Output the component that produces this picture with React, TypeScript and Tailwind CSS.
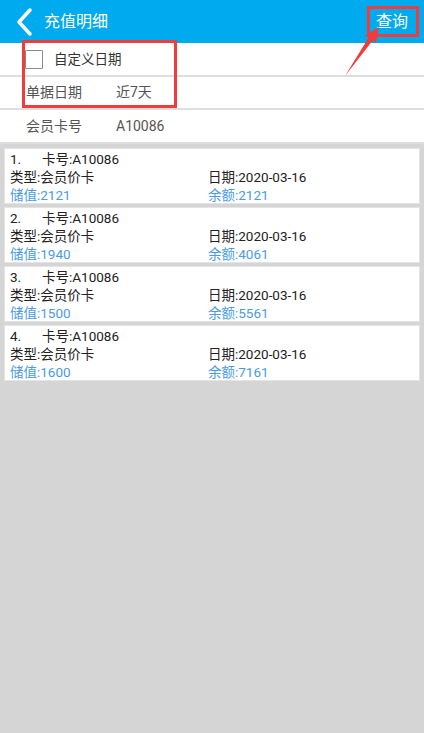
import React from "react";

const items = [
  { n: "1.", card: "A10086", type: "会员价卡", date: "2020-03-16", store: "2121", bal: "2121" },
  { n: "2.", card: "A10086", type: "会员价卡", date: "2020-03-16", store: "1940", bal: "4061" },
  { n: "3.", card: "A10086", type: "会员价卡", date: "2020-03-16", store: "1500", bal: "5561" },
  { n: "4.", card: "A10086", type: "会员价卡", date: "2020-03-16", store: "1600", bal: "7161" },
];

export default function App() {
  return (
    <div
      className="relative w-[424px] h-[733px] bg-[#d5d5d5] overflow-hidden"
      style={{ fontFamily: "Roboto, 'Noto Sans CJK SC', sans-serif" }}
    >
      {/* header */}
      <div className="h-[43px] bg-[#00aaef] flex items-center text-white">
        <svg width="40" height="43" viewBox="0 0 40 43" className="shrink-0">
          <polyline points="30,10 19,22 30,34" fill="none" stroke="white" strokeWidth="3.5" strokeLinecap="round" strokeLinejoin="round" />
        </svg>
        <span className="ml-[4px] text-[16px]">充值明细</span>
        <span className="ml-auto mr-[16px] text-[16px]">查询</span>
      </div>

      {/* filter rows */}
      <div className="bg-white">
        <div className="h-[34px] flex items-center border-b-2 border-[#dedede]">
          <div className="ml-[25px] w-[18px] h-[19px] border border-[#8a8a8a] rounded-[1px]" />
          <span className="ml-[11px] text-[13.5px] text-[#333]">自定义日期</span>
        </div>
        <div className="h-[33px] flex items-center border-b-2 border-[#dedede] text-[14px] text-[#555]">
          <span className="ml-[26px] w-[90px]">单据日期</span>
          <span>近7天</span>
        </div>
        <div className="h-[34px] flex items-center border-b-2 border-[#dedede] text-[14px] text-[#555]">
          <span className="ml-[26px] w-[90px]">会员卡号</span>
          <span>A10086</span>
        </div>
      </div>

      {/* list */}
      <div className="flex flex-col gap-[3px] px-[4px] pt-[4px]">
        {items.map((it) => (
          <div key={it.n} className="h-[56px] bg-white border border-[#e4e4e4] pl-[5px] pt-[1px] text-[13.5px] leading-[18px]">
            <div className="flex text-[#222]">
              <span className="w-[32px]">{it.n}</span>
              <span>卡号:{it.card}</span>
            </div>
            <div className="flex text-[#222]">
              <span className="w-[198px]">类型:{it.type}</span>
              <span>日期:{it.date}</span>
            </div>
            <div className="flex text-[#4a9be6]">
              <span className="w-[198px]">储值:{it.store}</span>
              <span>余额:{it.bal}</span>
            </div>
          </div>
        ))}
      </div>

      {/* red annotations */}
      <div className="absolute left-[22px] top-[40px] w-[155px] h-[68px] border-[3px] border-[#f23b3b]" />
      <div className="absolute left-[367px] top-[6px] w-[52px] h-[31px] border-[3px] border-[#f23b3b]" />
      <svg className="absolute left-0 top-0" width="424" height="120" viewBox="0 0 424 120">
        <polygon points="345,76 368.5,37.7 365.2,35.4 379,27 376,42.8 372.7,40.5" fill="#f23b3b" />
      </svg>
    </div>
  );
}
